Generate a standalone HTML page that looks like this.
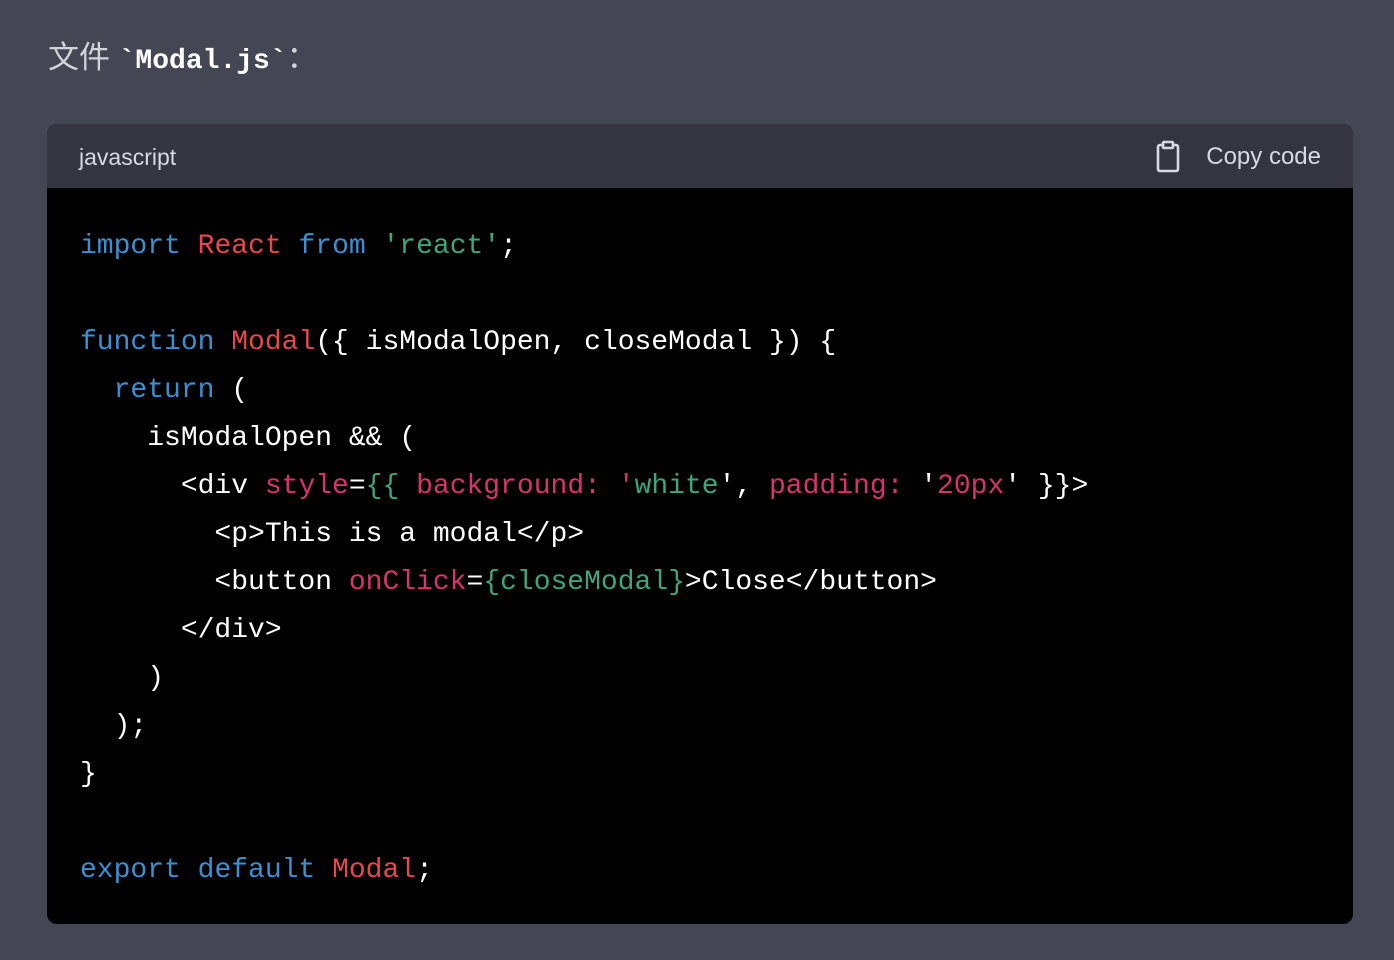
<!DOCTYPE html>
<html><head><meta charset="utf-8"><style>
body{margin:0;width:1394px;height:960px;background:#444654;overflow:hidden;font-family:"Liberation Sans","Noto Sans CJK SC",sans-serif}
.t{position:absolute;left:48px;top:36px;font-size:31px;color:#d1d5db;line-height:44px}
.t code{font-family:"Liberation Mono",monospace;font-weight:bold;color:#fff;font-size:28px}
.box{position:absolute;left:47px;top:124px;width:1306px;height:800px;border-radius:10px;overflow:hidden;background:#000}
.hd{height:64px;background:#343541;color:#d9d9e3;font-size:23px;position:relative}
.hd .l{position:absolute;left:32px;top:20px}
.hd .r{position:absolute;right:32px;top:19px;font-size:24px}
.hd svg{position:absolute;left:1108px;top:16px}
pre{margin:0;padding:35px 0 0 33px;font-family:"Liberation Mono",monospace;font-size:28px;line-height:48px;color:#fff}
.k{color:#3d8fd1}.n{color:#e8474b}.s{color:#3fa57d}.a{color:#d9336f}
</style></head><body>
<div class="t">文件 <code>`Modal.js`</code>：</div>
<div class="box">
<div class="hd"><span class="l">javascript</span>
<svg width="28" height="34" viewBox="0 0 28 34" fill="none" stroke="#d9d9e3" stroke-width="2.6" stroke-linecap="round" stroke-linejoin="round"><path d="M8 5H5a2 2 0 0 0-2 2v22a2 2 0 0 0 2 2h16a2 2 0 0 0 2-2V7a2 2 0 0 0-2-2h-3"/><rect x="8" y="2" width="10" height="6" rx="1"/></svg>
<span class="r">Copy code</span></div>
<pre><span class="k">import</span> <span class="n">React</span> <span class="k">from</span> <span class="s">'react'</span>;

<span class="k">function</span> <span class="n">Modal</span>({ isModalOpen, closeModal }) {
  <span class="k">return</span> (
    isModalOpen &amp;&amp; (
      &lt;div <span class="a">style</span>=<span class="s">{{</span> <span class="a">background:</span> <span class="a">'</span><span class="s">white</span>', <span class="a">padding:</span> '<span class="a">20px</span>' }}&gt;
        &lt;p&gt;This is a modal&lt;/p&gt;
        &lt;button <span class="a">onClick</span>=<span class="s">{closeModal}</span>&gt;Close&lt;/button&gt;
      &lt;/div&gt;
    )
  );
}

<span class="k">export</span> <span class="k">default</span> <span class="n">Modal</span>;</pre>
</div>
</body></html>
